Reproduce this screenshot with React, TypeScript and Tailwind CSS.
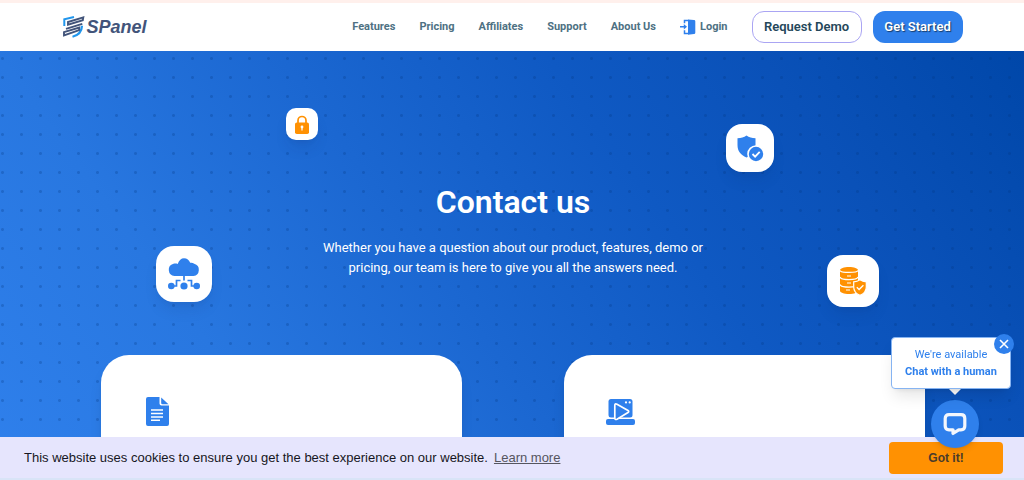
import type { ReactNode } from "react";

const navLinks = ["Features", "Pricing", "Affiliates", "Support", "About Us"];

const LogoMark = () => {
  return (
    <svg viewBox="0 0 22 22" className="h-[22px] w-[22px]" fill="none">
      <path d="M1.300 10V3.300L11 1" stroke="#2196ec" strokeWidth="2" />
      <path d="M9.500 20.800c6-1.500 9.300-5.500 9.500-11" stroke="#2196ec" strokeWidth="2.200" />
      <path
        d="M20.300 1.300 5 6v2.700l14.800-4.500ZM3 12.800l16.300-4.900M1 16.200l15.200-4.700v2.600L1 19.500Z"
        stroke="#42547a"
        strokeWidth="1.900"
      />
    </svg>
  );
};

const LoginIcon = () => {
  return (
    <svg viewBox="0 0 16 16" className="h-4 w-4" fill="none">
      <path d="M8 .5 14 1q1.300.1 1.300 1.300v11.400q0 1.200-1.300 1.300l-6 .7Z" fill="#2f80ec" />
      <path d="M8.500 1.500h-4V4.300M8.500 14.500h-4V11.200M0 7.700h5" stroke="#2f80ec" strokeWidth="1.500" />
      <path d="m3.800 4.900 3.200 2.800-3.200 2.800Z" fill="#2f80ec" />
    </svg>
  );
};

const LockIcon = () => {
  return (
    <svg viewBox="0 0 14 19" className="h-[19px] w-[14px]">
      <path d="M3 8V5.500a4 4 0 0 1 8 0V8" fill="none" stroke="#ff9102" strokeWidth="1.700" />
      <rect x="0" y="7.500" width="14" height="11.500" rx="1.800" fill="#ff9102" />
      <circle cx="7" cy="12" r="1.400" fill="#fff" />
      <path d="M6.400 12h1.200v3.500H6.400z" fill="#fff" />
    </svg>
  );
};

const ShieldIcon = () => {
  return (
    <svg viewBox="0 0 27 27" className="h-[27px] w-[27px]">
      <path
        d="M9.500.5C12 2.500 15 3 18.500 3.200V10c0 6-3 10-9 12.500C3.500 20 .5 16 .5 10V3.200C4 3 7 2.500 9.500.5Z"
        fill="#2f80ec"
      />
      <circle cx="19" cy="19" r="8" fill="#2f80ec" stroke="#fff" strokeWidth="1.600" />
      <path d="m15.500 19 2.600 2.600 4.600-4.800" fill="none" stroke="#fff" strokeWidth="1.800" />
    </svg>
  );
};

const CloudIcon = () => {
  return (
    <svg viewBox="0 0 32 32" className="h-8 w-8">
      <path
        d="M6.500 18A6.200 6.200 0 0 1 5.500 5.800c1.500-.3 3-.2 4.200.1C11 2 13.200.2 16 .2c3 0 5.200 2 6.200 4.600 1.500-.3 3 .1 4 .9a6.300 6.300 0 0 1-.7 12.300Z"
        fill="#2f80ec"
      />
      <path d="M16 18v4.500M3.500 28h5v-5.500h4M28.500 28h-5v-5.500h-4" fill="none" stroke="#2f80ec" strokeWidth="1.700" />
      <circle cx="3.300" cy="28" r="3.300" fill="#2f80ec" />
      <circle cx="16" cy="28" r="3.600" fill="#2f80ec" />
      <circle cx="28.700" cy="28" r="3.300" fill="#2f80ec" />
    </svg>
  );
};

const DatabaseIcon = () => {
  return (
    <svg viewBox="0 0 27 29" className="h-[29px] w-[27px]">
      <path
        d="M0 3.200C0 1.400 4 0 9 0s9 1.400 9 3.200v20.600C18 25.600 14 27 9 27s-9-1.400-9-3.200Z"
        fill="#ff9102"
      />
      <path
        d="M0 3.500C1 6 17 6 18 3.500M0 10c1 3.500 17 3.500 18 0M0 17.500c1 3.500 17 3.500 18 0"
        fill="none"
        stroke="#fff"
        strokeWidth="1.200"
      />
      <path d="M7 9h4M7 16h4M6 23h4" stroke="#fff" strokeWidth="1" />
      <path
        d="M20 12.700c2 1.400 4 2 6.300 2.200v5c0 4-2.300 6.700-6.300 8.400-4-1.700-6.300-4.400-6.300-8.400v-5c2.300-.2 4.300-.8 6.300-2.200Z"
        fill="#ff9102"
        stroke="#fff"
        strokeWidth="1.200"
      />
      <path d="m16.800 20.300 2.300 2.200 4.300-4.300" fill="none" stroke="#fff" strokeWidth="1.300" />
    </svg>
  );
};

const DocumentIcon = () => {
  return (
    <svg viewBox="0 0 23 29" className="h-[29px] w-[23px]">
      <path d="M2 0h11.500v6.500q0 2 2 2H23V27q0 2-2 2H2q-2 0-2-2V2Q0 0 2 0Z" fill="#2f80ec" />
      <path d="M15.200.5 22.500 7.200h-6q-1.300 0-1.300-1.300Z" fill="#2f80ec" />
      <path d="M5 13h12M5 16.500h12M5 20h12M5 23.300h9" stroke="#fff" strokeWidth="1.600" />
    </svg>
  );
};

const VideoIcon = () => {
  return (
    <svg viewBox="0 0 29 26" className="h-[26px] w-[29px]">
      <rect x="2.500" y="0" width="24" height="18.500" rx="2.500" fill="#2f80ec" />
      <rect x="0" y="20" width="29" height="6" rx="2" fill="#2f80ec" />
      <circle cx="20" cy="3.400" r="1.100" fill="#fff" />
      <circle cx="23.700" cy="3.400" r="1.100" fill="#fff" />
      <path
        d="M8.800 6.500q0-2.500 2.200-1.300l11 6.300q1.400 1 0 2l-11 6.700q-2.200 1-2.200-1.300Z"
        fill="#2f80ec"
        stroke="#fff"
        strokeWidth="1.700"
      />
    </svg>
  );
};

const ChatIcon = () => {
  return (
    <svg viewBox="0 0 24 24" className="h-6 w-6" fill="none">
      <path
        d="M6 2.700h12q3.800 0 3.800 3.800v7.500q0 3.800-3.800 3.800h-2.300L10 21.500v-3.700H6q-3.800 0-3.800-3.800V6.500q0-3.800 3.800-3.800Z"
        stroke="#f4f7fd"
        strokeWidth="3.200"
        strokeLinejoin="round"
      />
    </svg>
  );
};

const CloseIcon = () => {
  return (
    <svg viewBox="0 0 10 10" className="h-[10px] w-[10px]">
      <path d="m1 1 8 8M9 1 1 9" stroke="#fff" strokeWidth="1.600" />
    </svg>
  );
};

const Header = () => {
  return (
    <header className="border-t-[3px] border-[#fff0ec] bg-white">
      <div className="mx-auto flex h-12 w-[88%] items-center justify-between">
        <a href="#" className="flex items-center gap-px pl-0.5 text-[#42547a]">
          <LogoMark />
          <span className="font-['Liberation_Sans'] text-lg font-bold italic">SPanel</span>
        </a>
        <nav className="flex items-center text-[11px] font-bold text-[#4e7183]">
          <div className="flex items-center gap-6">
            {navLinks.map((link) => (
              <a key={link} href="#">
                {link}
              </a>
            ))}
            <a href="#" className="flex items-center gap-1">
              <LoginIcon />
              Login
            </a>
          </div>
          <button className="ml-6 h-8 w-[110px] rounded-xl border border-[#aaa5f3] text-[13px] font-semibold text-[#24475a]">
            Request Demo
          </button>
          <button className="ml-[11px] h-8 w-[90px] rounded-xl bg-[#2f80ec] text-[13px] font-semibold text-white [text-shadow:1px_1px_1px_#173a66]">
            Get Started
          </button>
        </nav>
      </div>
    </header>
  );
};

type TileProps = { className: string; children: ReactNode };
const Tile = ({ className, children }: TileProps) => {
  return (
    <div className={`absolute flex items-center justify-center bg-white shadow-lg shadow-blue-950/10 ${className}`}>
      {children}
    </div>
  );
};

const Hero = () => {
  return (
    <main className="relative flex flex-1 flex-col bg-[radial-gradient(circle,#00337b40_1px,transparent_2px),linear-gradient(54deg,#2f80ec_0%,#2877e0_23%,#1b67d1_44%,#0f59c3_64%,#0a51b8_80%,#0047a9_100%)] bg-[size:19px_19px,100%_100%] bg-[position:12px_-2px,0_0] pl-0.5">
      <Tile className="left-[27.9%] top-[57px] h-8 w-8 rounded-[10px]">
        <LockIcon />
      </Tile>
      <Tile className="left-[70.9%] top-[73px] h-12 w-12 rounded-2xl">
        <ShieldIcon />
      </Tile>
      <Tile className="left-[15.2%] top-[195px] h-14 w-14 rounded-[18px]">
        <CloudIcon />
      </Tile>
      <Tile className="left-[80.8%] top-[204px] h-[52px] w-[52px] rounded-2xl">
        <DatabaseIcon />
      </Tile>

      <section className="pt-[127px] text-center text-white">
        <h1 className="text-[32px] font-semibold leading-[48px]">Contact us</h1>
        <p className="mx-auto mt-3 w-[400px] text-[13px] leading-5">
          Whether you have a question about our product, features, demo or pricing, our team is here to give you all
          the answers need.
        </p>
      </section>

      <section className="mx-auto mt-[77px] grid w-[80.6%] flex-1 grid-cols-2 gap-[102px]">
        <div className="rounded-t-[28px] bg-white px-[45px] pt-[42px] shadow-lg">
          <DocumentIcon />
        </div>
        <div className="rounded-t-[28px] bg-white px-[42px] pt-11 shadow-lg">
          <VideoIcon />
        </div>
      </section>
    </main>
  );
};

const CookieBar = () => {
  return (
    <div className="fixed inset-x-0 bottom-0 border-b-2 border-[#d9e4f7] bg-[#e6e5fd] font-['Liberation_Sans']">
      <div className="flex h-[41px] items-center justify-between pl-6 pr-[21px]">
        <p className="text-[13px] text-[#161622]">
          This website uses cookies to ensure you get the best experience on our website.
          <a href="#" className="ml-1.5 text-[#55555f] underline">
            Learn more
          </a>
        </p>
        <button className="h-8 w-[114px] rounded bg-[#ff9102] text-xs font-bold text-[#493b2b]">Got it!</button>
      </div>
    </div>
  );
};

const ChatWidget = () => {
  return (
    <aside className="fixed bottom-8 right-[13px] w-[120px]">
      <div className="relative rounded border border-[#86b4f2] bg-white py-2 text-center text-[11px] leading-[17px] text-[#2f80ec] shadow-lg">
        <p>We're available</p>
        <p className="font-bold">Chat with a human</p>
        <button
          aria-label="Close"
          className="absolute -right-1 -top-1 flex h-5 w-5 items-center justify-center rounded-full bg-[#2f80ec]"
        >
          <CloseIcon />
        </button>
      </div>
      <div className="flex flex-col items-center pl-2">
        <svg viewBox="0 0 12 6" className="h-[6px] w-3">
          <path d="M0 0h12L6 6Z" fill="#fff" />
        </svg>
        <button
          aria-label="Open chat"
          className="mt-[5px] flex h-12 w-12 items-center justify-center rounded-full bg-[#2f80ec] shadow-md"
        >
          <ChatIcon />
        </button>
      </div>
    </aside>
  );
};

const App = () => {
  return (
    <div className="flex min-h-screen flex-col font-[Roboto,sans-serif]">
      <Header />
      <Hero />
      <CookieBar />
      <ChatWidget />
    </div>
  );
};

export default App;
